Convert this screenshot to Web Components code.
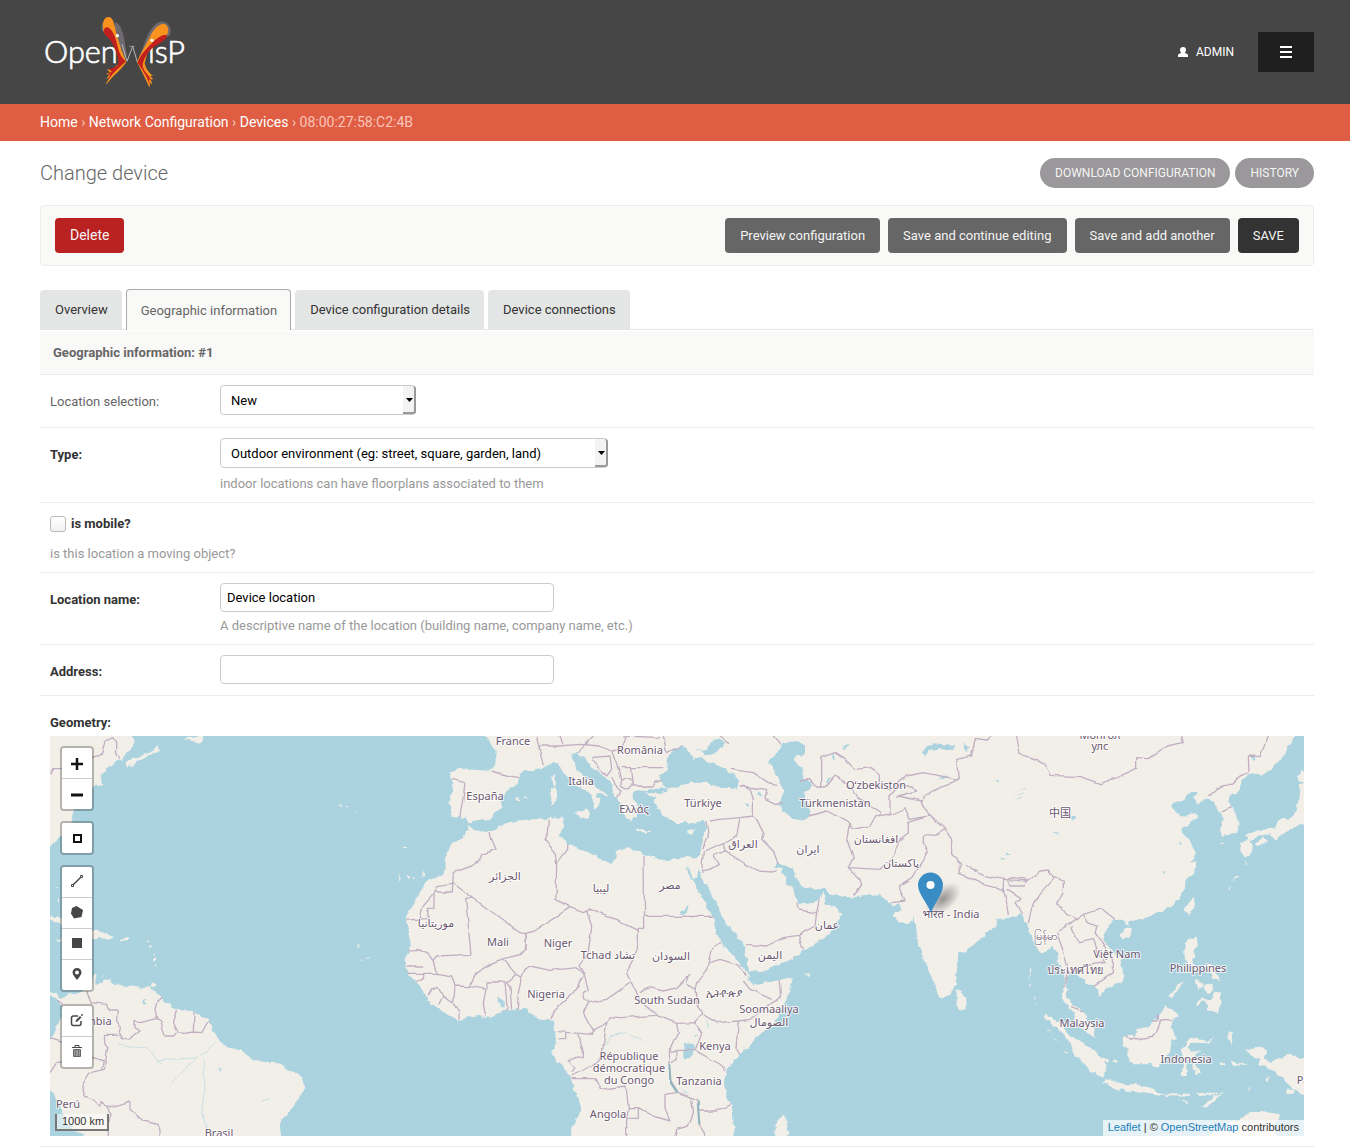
<!DOCTYPE html>
<html lang="en">
<head>
<meta charset="utf-8">
<meta name="viewport" content="width=device-width, initial-scale=1">
<title>Change device</title>
<style>
  body {
    margin: 0;
    background: white;
    color: #666;
    font: 13px/16px Roboto, sans-serif;
  }

  main {
    padding: 17px 36px 0 40px;
  }
</style>
</head>
<body>

<site-header></site-header>

<bread-crumbs current="08:00:27:58:C2:4B">
  <a href="#">Home</a>
  <a href="#">Network Configuration</a>
  <a href="#">Devices</a>
</bread-crumbs>

<main>
  <page-title>
    Change device
    <ow-button slot="tools" kind="pill">DOWNLOAD CONFIGURATION</ow-button>
    <ow-button slot="tools" kind="pill">HISTORY</ow-button>
  </page-title>

  <submit-row>
    <ow-button slot="start" kind="delete">Delete</ow-button>
    <ow-button>Preview configuration</ow-button>
    <ow-button>Save and continue editing</ow-button>
    <ow-button>Save and add another</ow-button>
    <ow-button kind="save">SAVE</ow-button>
  </submit-row>

  <tab-bar>
    <a href="#overview">Overview</a>
    <a href="#geo" class="current">Geographic information</a>
    <a href="#config">Device configuration details</a>
    <a href="#connections">Device connections</a>
  </tab-bar>

  <form-module heading="Geographic information: #1">
    <select-row label="Location selection:" value="New"></select-row>
    <select-row label="Type:" value="Outdoor environment (eg: street, square, garden, land)"
      help="indoor locations can have floorplans associated to them" required wide></select-row>
    <check-row label="is mobile?" help="is this location a moving object?" required></check-row>
    <text-row label="Location name:" value="Device location"
      help="A descriptive name of the location (building name, company name, etc.)" required></text-row>
    <text-row label="Address:" value="" required></text-row>
    <map-row label="Geometry:" required></map-row>
  </form-module>
</main>

<script>
class SiteHeader extends HTMLElement {
  constructor() {
    super();
    this.attachShadow({ mode: 'open' });
    this.shadowRoot.innerHTML = `
      <style>
        :host {
          display: flex;
          align-items: center;
          height: 104px;
          padding: 0 36px 0 40px;
          background: #464646;
        }

        #logo {
          margin-right: auto;
        }

        #logo svg {
          display: block;
        }

        #user {
          display: flex;
          align-items: center;
          gap: 7px;
          margin-right: 24px;
          color: white;
          font-size: 12px;
          text-decoration: none;
        }

        #menu {
          display: flex;
          align-items: center;
          justify-content: center;
          width: 56px;
          height: 40px;
          padding: 0;
          border: 0;
          background: #1f1f1f;
          cursor: pointer;
        }
      </style>

      <a id="logo" href="#" aria-label="OpenWISP">
        <svg width="150" height="80" viewBox="30 36 450 240">
          <g fill="#fff" stroke="#fff" stroke-width="2" font-family="Lato, sans-serif" font-weight="300" font-size="92">
            <text x="42" y="188">Open</text>
            <text x="354" y="188">isP</text>
          </g>
          <g fill="#6f6a72">
            <path d="M254 67C268 66 278 92 283 118L290 165 286 178C276 155 262 120 254 90Z"/>
            <path d="M398 64C372 66 356 96 344 128L326 176 334 168 372 112 412 74Z"/>
            <path d="M404 66C420 72 426 92 419 106L410 112Z"/>
            <path d="M219 66C213 76 214 90 220 96L226 80Z"/>
          </g>
          <g fill="none" stroke="#b9b6bb" stroke-width="3">
            <path d="M276 132L291 184 308 139 322 186"/>
            <path d="M298 139H314" stroke-width="2"/>
          </g>
          <path fill="#f7931e" d="M219 84C217 60 226 51 236 51 248 52 251 66 255 82 259 104 268 128 275 152L289 186C274 208 256 222 247 232L233 248 226 254 240 230 228 238 238 224 228 222 240 217 230 208 242 209C254 204 262 196 268 190L262 150 240 114C226 106 220 96 219 84Z"/>
          <path fill="#c1201f" d="M222 90C224 80 232 80 240 86 252 98 258 118 262 136 268 160 274 174 288 184L262 208 248 222 234 240 240 226 234 219 246 216 238 208 262 198C268 190 264 174 260 160 254 138 244 122 232 110 224 104 220 98 222 90Z"/>
          <path fill="#f7931e" d="M415 92C414 74 404 70 394 73 378 79 368 94 360 110 346 138 332 158 321 186L332 208 344 232 356 258 359 262 360 248 367 254 362 238 370 238 360 228 369 228C360 220 348 210 344 190L352 160 384 124C400 116 414 106 415 92Z"/>
          <path fill="#c1201f" d="M411 108C406 100 390 108 378 118 362 132 350 146 338 160 332 168 326 178 323 188L336 208 350 232 359 254 357 238 364 242 356 228C348 218 338 208 338 194 342 174 354 156 370 142 386 130 408 122 411 108Z"/>
          <circle cx="262" cy="107" r="5" fill="#fff"/>
          <circle cx="366" cy="121" r="5" fill="#fff"/>
        </svg>
      </a>
      <a id="user" href="#">
        <svg width="12" height="12" viewBox="0 0 12 12" fill="#fff">
          <path d="M6 1c2 0 3 1.300 3 3 0 1.200-.5 2.200-1.200 2.800L11 8.500V11H1V8.500l3.200-1.700C3.500 6.200 3 5.200 3 4c0-1.700 1-3 3-3z"/>
        </svg>
        ADMIN
      </a>
      <button id="menu" type="button" aria-label="Menu">
        <svg width="12" height="12" viewBox="0 0 12 12" stroke="#fff" stroke-width="2">
          <path d="M0 1h12M0 6h12M0 11h12"/>
        </svg>
      </button>
    `;
  }
}

customElements.define('site-header', SiteHeader);

class BreadCrumbs extends HTMLElement {
  constructor() {
    super();
    this.attachShadow({ mode: 'open' });
  }

  connectedCallback() {
    const links = [...this.querySelectorAll('a')];
    links.forEach((link, i) => { link.slot = `crumb-${i}`; });
    this.shadowRoot.innerHTML = `
      <style>
        :host {
          display: block;
          padding: 8px 40px;
          background: #df5d43;
          color: #f9c5b8;
          font-size: 14px;
          line-height: 21px;
        }

        ::slotted(a) {
          color: white;
          text-decoration: none;
        }
      </style>
      <nav>${links.map((link, i) => `<slot name="crumb-${i}"></slot> › `).join('')}${this.getAttribute('current')}</nav>
    `;
  }
}

customElements.define('bread-crumbs', BreadCrumbs);

class OwButton extends HTMLElement {
  constructor() {
    super();
    this.attachShadow({ mode: 'open' });
    this.shadowRoot.innerHTML = `
      <style>
        :host {
          display: block;
        }

        button {
          display: block;
          height: 35px;
          padding: 0 15px;
          border: 0;
          border-radius: 4px;
          background: #666;
          color: #f4f4f4;
          font: inherit;
          cursor: pointer;
        }

        :host([kind="delete"]) button {
          padding-bottom: 2px;
          background: #ba2121;
          font-size: 14px;
        }

        :host([kind="save"]) button {
          background: #333;
        }

        :host([kind="pill"]) button {
          height: 30px;
          border-radius: 15px;
          background: #9a989a;
          font-size: 12px;
        }
      </style>
      <button type="button"><slot></slot></button>
    `;
  }
}

customElements.define('ow-button', OwButton);

class PageTitle extends HTMLElement {
  constructor() {
    super();
    this.attachShadow({ mode: 'open' });
    this.shadowRoot.innerHTML = `
      <style>
        :host {
          display: flex;
          align-items: center;
          justify-content: space-between;
          margin-bottom: 17px;
        }

        h1 {
          margin: 0;
          font-size: 20px;
          font-weight: 300;
          line-height: 30px;
        }

        #tools {
          display: flex;
          gap: 5px;
        }
      </style>
      <h1><slot></slot></h1>
      <div id="tools"><slot name="tools"></slot></div>
    `;
  }
}

customElements.define('page-title', PageTitle);

class SubmitRow extends HTMLElement {
  constructor() {
    super();
    this.attachShadow({ mode: 'open' });
    this.shadowRoot.innerHTML = `
      <style>
        :host {
          display: flex;
          gap: 8px;
          margin-bottom: 23px;
          padding: 12px 14px;
          border: 1px solid #ececec;
          border-radius: 4px;
          background: #f9f9f8;
        }

        #start {
          margin-right: auto;
        }
      </style>
      <div id="start"><slot name="start"></slot></div>
      <slot></slot>
    `;
  }
}

customElements.define('submit-row', SubmitRow);

class TabBar extends HTMLElement {
  constructor() {
    super();
    this.attachShadow({ mode: 'open' });
    this.shadowRoot.innerHTML = `
      <style>
        :host {
          display: block;
        }

        nav {
          display: flex;
          align-items: flex-end;
          gap: 4px;
          border-bottom: 1px solid #e4e6e5;
        }

        ::slotted(a) {
          padding: 12px 14px 11px 15px;
          border-radius: 4px 4px 0 0;
          background: #e4e6e5;
          color: #333;
          text-decoration: none;
        }

        ::slotted(a.current) {
          margin-bottom: -1px;
          padding: 13px 13px 11px 14px;
          border: 1px solid #aaa;
          border-bottom: 0;
          background: #f9f9f8;
          color: #666;
        }
      </style>
      <nav><slot></slot></nav>
    `;
  }
}

customElements.define('tab-bar', TabBar);

class FormModule extends HTMLElement {
  constructor() {
    super();
    this.attachShadow({ mode: 'open' });
    this.shadowRoot.innerHTML = `
      <style>
        :host {
          display: block;
        }

        h2 {
          margin: 1px 0 0;
          padding: 14px 13px 13px;
          border-bottom: 1px solid #ececec;
          background: #f9f9f8;
          font-size: 13px;
          font-weight: bold;
        }
      </style>
      <h2>${this.getAttribute('heading')}</h2>
      <slot></slot>
    `;
  }
}

customElements.define('form-module', FormModule);

// Shared markup of the form rows: each subclass only draws its control
class FieldRow extends HTMLElement {
  constructor() {
    super();
    this.attachShadow({ mode: 'open' });
  }

  connectedCallback() {
    const help = this.getAttribute('help');
    this.shadowRoot.innerHTML = `
      <style>
        :host {
          display: grid;
          grid-template-columns: 170px 1fr;
          padding: 10px;
          border-bottom: 1px solid #ececec;
        }

        label {
          padding-top: 9px;
        }

        :host([required]) label {
          color: #333;
          font-weight: bold;
        }

        .help {
          padding-top: 6px;
          color: #999;
        }

        input, select {
          box-sizing: border-box;
          border: 1px solid #ccc;
          border-radius: 4px;
          background: white;
          color: black;
          font: inherit;
        }
        ${this.styles()}
      </style>
      ${this.field()}
      ${help ? `<div class="help">${help}</div>` : ''}
    `;
  }

  styles() {
    return '';
  }
}

class SelectRow extends FieldRow {
  styles() {
    return `
      :host {
        padding-bottom: 12px;
      }

      :host([help]) {
        padding-bottom: 10px;
      }

      .help {
        grid-column: 2;
        padding-top: 8px;
      }

      .select {
        position: relative;
        width: 196px;
      }

      :host([wide]) .select {
        width: 388px;
      }

      select {
        display: block;
        width: 100%;
        height: 30px;
        padding: 2px 16px 0 10px;
        appearance: none;
      }

      .arrow {
        position: absolute;
        top: 1px;
        right: 0;
        box-sizing: border-box;
        width: 13px;
        height: 28px;
        border: solid #999;
        border-width: 0 2px 2px 0;
        border-radius: 0 3px 3px 0;
        background: #f4f2f2;
        pointer-events: none;
      }

      .arrow svg {
        display: block;
        margin: 12px 0 0 3px;
      }
    `;
  }

  field() {
    return `
      <label for="control">${this.getAttribute('label')}</label>
      <div class="select">
        <select id="control"><option>${this.getAttribute('value')}</option></select>
        <span class="arrow"><svg width="7" height="4"><path d="M0 0h7L3.500 4z"/></svg></span>
      </div>
    `;
  }
}

customElements.define('select-row', SelectRow);

class TextRow extends FieldRow {
  styles() {
    return `
      .help {
        grid-column: 2;
      }

      input {
        width: 334px;
        height: 29px;
        padding: 0 6px;
      }

      :host(:not([help])) {
        padding-bottom: 11px;
      }
    `;
  }

  field() {
    return `
      <label for="control">${this.getAttribute('label')}</label>
      <input id="control" type="text" value="${this.getAttribute('value')}">
    `;
  }
}

customElements.define('text-row', TextRow);

class CheckRow extends FieldRow {
  styles() {
    return `
      :host {
        grid-template-columns: 1fr;
      }

      .check {
        display: flex;
        align-items: center;
        gap: 5px;
        padding-top: 3px;
      }

      .check label {
        padding: 0;
      }

      .help {
        padding-top: 14px;
      }

      input {
        width: 16px;
        height: 16px;
        margin: 0;
        border-color: #bbb;
        border-radius: 3px;
        background: linear-gradient(white, #f0f0f0);
        appearance: none;
      }
    `;
  }

  field() {
    return `
      <div class="check">
        <input id="control" type="checkbox">
        <label for="control">${this.getAttribute('label')}</label>
      </div>
    `;
  }
}

customElements.define('check-row', CheckRow);

class MapRow extends FieldRow {
  styles() {
    return `
      :host {
        grid-template-columns: 1fr;
      }

      .label {
        padding: 9px 0 5px;
        color: #333;
        font-weight: bold;
      }
    `;
  }

  field() {
    return `
      <div class="label">${this.getAttribute('label')}</div>
      <world-map></world-map>
    `;
  }
}

// Coastlines and borders, in thirds of a pixel from the map's top left corner
const LAND = [
  // land that runs on past the edges of the map
  'M-60 -60H245V4H-60Z M1305 -60H3735V4H1305Z M105 1196H692V1260H105Z M1565 1196H2050V1260H1565Z M-60 -60H4V330H-60Z M-60 912H4V1060H-60Z M3758 968H3822V1082H3758Z M3758 145H3822V260H3758Z M3480 1196H3685V1260H3480Z',
  // north america
  'M0 0H245L255 25 240 40 220 65 185 85 160 105 150 125 160 145 135 147 110 165 90 185 75 215 68 235 60 260 35 300 10 320 0 330Z',
  'M228 80L255 62 270 65 310 45 322 25 332 40 300 60 260 75 235 98Z M400 8L420 2 455 0 458 15 445 24 430 12Z',
  // caribbean
  'M0 535L30 545 45 560 30 565 0 547Z M118 605L126 588 140 580 165 590 188 603 170 608Z M210 607H234V613H210Z M20 607H40V612H20Z',
  'M22 487l8 4-4 8z M14 454h10v2H14z M290 612h6v4h-6z M300 628h4v6h-4z M308 652h4v6h-4z M312 668h6v8h-6z M314 686h5v5h-5z M305 740h10v12h-12z M160 718h4v6h-4z M250 342h3v3h-3z',
  // south america
  'M0 765L20 770 32 793 50 780 80 770 120 750 132 720 140 715 135 740 155 738 180 730 195 745 235 750 270 755 300 750 315 770 335 785 360 808 380 822 430 825 465 845 485 870 492 895 505 908 515 930 540 935 575 945 610 970 640 978 675 977 700 995 725 1010 750 1015 760 1035 762 1055 755 1080 735 1105 710 1140 695 1150 690 1170 692 1200H105L80 1190 45 1160 30 1110 0 1060V912L15 880 30 850 38 808 25 795 10 778 0 775Z',
  // europe and asia
  'M1305 0L1320 15 1335 40 1340 70 1330 100 1325 105 1280 102 1235 100 1220 97 1200 108 1205 130 1208 160 1197 205 1205 215V243L1250 245 1260 265 1268 258 1300 250 1322 250 1335 235 1345 218 1357 210 1350 190 1370 165 1408 142 1410 110 1425 102 1440 105 1470 97 1490 90 1510 80 1530 90 1540 110 1560 130 1585 150 1605 160 1625 178 1635 200 1630 218 1645 210 1652 192 1637 182 1640 170 1660 176 1672 182 1668 170 1640 155 1625 140 1600 120 1580 95 1565 70 1568 50 1585 48 1593 62 1600 60 1610 80 1635 100 1660 118 1680 135 1688 145 1685 170 1700 185 1710 200 1720 215 1715 232 1740 255 1750 240 1762 248 1765 222 1760 200 1745 185 1750 170 1770 165 1785 170 1800 182 1818 182 1810 200 1825 220 1830 235 1850 245 1865 260 1890 262 1910 255 1930 265 1965 250 1968 280 1960 310 1950 345 1940 365 1925 370 1908 374 1930 425 1940 430 1950 400 1953 425 1970 450 2000 500 2020 550 2050 585 2080 625 2090 665 2098 705 2130 708 2170 690 2220 672 2250 655 2260 640 2290 630 2340 590 2345 578 2377 535 2360 512 2325 505 2318 468 2308 490 2290 500 2260 505 2240 500 2235 465 2210 440 2195 400 2175 395 2180 383 2205 390 2230 400 2240 425 2265 455 2290 458 2325 455 2335 475 2405 485 2450 480 2490 478 2505 490 2525 510 2545 508 2555 520 2530 535 2550 560 2570 565 2590 555 2593 540 2598 570 2605 630 2620 665 2640 715 2655 750 2665 780 2678 788 2695 775 2715 750 2720 710 2725 655 2750 645 2770 625 2805 600 2815 585 2840 570 2840 550 2880 545 2915 530 2925 560 2940 580 2945 610 2965 635 2970 655 2990 652 3005 630 3020 645 3025 680 3042 710 3045 740 3035 770 3040 795 3055 810 3070 830 3080 860 3110 890 3135 905 3130 880 3115 850 3100 830 3085 815 3065 805 3050 780 3048 755 3050 730 3055 705 3080 712 3100 735 3120 745 3145 760 3145 780 3165 770 3180 750 3220 735 3218 700 3210 670 3185 640 3165 615 3160 595 3175 570 3195 550 3220 552 3235 572 3240 555 3270 547 3300 540 3340 525 3380 495 3400 465 3415 430 3435 395 3435 375 3420 380 3438 355 3420 315 3400 295 3390 285 3405 270 3445 243 3440 235 3410 238 3390 245 3385 232 3365 215 3370 200 3395 195 3420 165 3440 165 3432 190 3445 205 3480 185 3490 195 3500 225 3515 230 3518 260 3510 300 3530 298 3560 290 3567 270 3560 240 3545 215 3532 195 3545 180 3570 160 3575 130 3610 110 3635 120 3670 95 3700 60 3735 0Z',
  // africa
  'M1255 272L1275 283 1320 288 1350 270 1390 255 1440 250 1490 248 1515 245 1540 243 1538 255 1545 265 1535 280 1530 300 1550 320 1600 342 1625 355 1680 382 1700 370 1700 345 1730 333 1760 345 1782 358 1850 372 1910 362 1940 370 1950 380 1945 400 1935 432 1915 400 1908 390 1915 415 1935 440 1965 500 1990 545 1995 580 2015 620 2050 665 2090 705 2098 722 2090 735 2110 745 2190 732 2228 722 2225 745 2205 800 2190 830 2180 855 2130 895 2090 935 2060 965 2030 1000 2022 1040 2030 1085 2045 1105 2050 1150V1200H1560L1570 1170 1590 1130 1585 1090 1565 1040 1560 1020 1530 980 1505 960 1515 930 1520 890 1510 855 1470 850 1450 835 1430 820 1410 818 1360 825 1320 845 1280 838 1225 852 1180 828 1135 795 1130 775 1105 745 1080 720 1070 700 1062 672 1075 645 1082 610 1070 560 1068 545 1100 490 1120 450 1135 430 1170 420 1190 400V350L1205 325 1240 305Z',
  'M2175 1240L2178 1165 2200 1135 2212 1155 2218 1240Z',
  // mediterranean islands
  'M1505 125L1515 113 1518 145 1508 148Z M1500 160L1520 153 1522 195 1505 203Z M1570 228L1615 222 1613 250 1590 242Z M1755 278L1805 285 1790 291 1758 285Z M1908 288L1938 278 1925 293Z M1395 188L1408 182 1414 192 1402 196Z M1422 182h8v4h-8z',
  // atlantic islands
  'M865 208l14 2-4 5zM888 207h6v4h-6z M915 227h12v4z M1062 333h9v3h-9z M1048 412l4 22h-5z M1068 420l14 6-6 6z M1088 426h6v6h-6z M1112 422l14-16-4 14-8 6z M923 628h8v6h-8z M965 648h4v4h-4z M936 668h5v3h-5z M952 665h8v4h-8z',
  // indian ocean
  'M2720 760L2735 765 2753 805 2745 820 2728 825 2720 805Z M2264 712L2276 708 2285 714 2270 717Z M2940 692l4 4-3 24-4 14z M2936 740h3v8h-3z M2950 780h3v8h-3z M2956 802h4v6h-4z M2982 832L3000 845 3003 857 2988 846Z',
  // china sea
  'M3210 595L3225 578 3248 578 3240 600 3220 610Z M3410 510L3430 482 3437 485 3430 515 3417 540 3408 525Z M3510 322L3522 317 3518 324Z',
  // japan
  'M3590 300L3615 285 3660 278 3675 280 3685 255 3700 245 3715 252 3740 225 3745 190 3750 145 3762 140V260L3745 270 3725 282 3700 290 3685 300 3680 318 3665 295 3630 302 3595 315Z M3567 325L3595 310 3607 325 3600 360 3585 370 3575 345Z M3615 320L3640 305 3655 312 3625 331Z M3743 120L3755 105 3762 108V138L3748 132Z M3584 380h6v4h-6z M3556 420l12-2-18 16z M3536 460l8-6-6 10z',
  // philippines
  'M3410 625L3418 605 3440 605 3443 625 3430 655 3425 680 3450 700 3440 704 3405 670 3402 645Z M3440 800L3460 790 3480 790 3495 770 3510 765 3515 800 3500 830 3475 820 3465 795 3440 808Z M3465 685L3490 690 3512 735 3490 728Z M3438 728L3462 745 3445 762Z M3460 752L3485 740 3492 765 3470 772Z M3355 780L3395 738 3400 744 3360 788Z',
  // indonesia
  'M3218 900L3235 895 3255 905 3260 880 3300 870 3330 835 3350 810 3390 835 3370 850 3365 880 3382 908 3365 915 3360 950 3340 965 3320 995 3295 985 3255 985 3235 975V945L3220 930Z',
  'M2980 832L3025 855 3060 895 3100 920 3130 945 3160 970 3165 1005 3160 1025 3120 1005 3080 960 3050 905 3015 870 2985 845Z M3160 1040L3170 1030 3215 1045 3260 1045 3310 1058 3340 1080 3270 1070 3200 1060Z',
  'M3405 925L3420 905 3475 915 3492 900 3480 920 3425 920 3410 935 3420 950 3455 938 3430 960 3455 1015 3440 1020 3425 975 3410 980V1020L3395 1020 3400 970 3395 945Z M3150 960l22 10 4 8-20-6z M3190 972h12v9h-12z',
  'M3345 1070L3420 1074 3418 1080 3350 1077Z M3430 1074L3460 1070 3520 1070 3500 1077 3440 1080Z M3455 1112L3490 1085 3525 1072 3490 1098 3465 1115Z M3385 1090L3418 1100 3410 1104Z M3535 890L3550 885 3542 930 3535 915Z M3510 982h14v8h-14z M3545 978L3590 985 3588 990 3548 986Z M3645 1030L3656 1018 3652 1042Z M3592 1055l10-6-6 14z',
  'M3012 905L3024 915 3018 914Z M3040 942L3052 952 3048 956Z M2994 880h6v4h-6z M3102 1016l6 5-4 1z',
  // new guinea and australia
  'M3590 945L3615 932 3648 940 3645 965 3660 980 3710 955 3762 968V1082L3730 1060 3705 1030 3660 1000 3625 990 3635 965 3605 960Z M3710 1060L3735 1062 3732 1070 3708 1072Z M3570 1150L3590 1130 3630 1125 3690 1135 3670 1170 3685 1200H3480L3530 1165Z'
];

const WATER = [
  // black sea, azov, caspian
  'M1835 150L1830 125 1850 100 1850 70 1865 45 1895 28 1912 38 1920 55 1930 68 1955 62 1970 78 2010 90 2050 115 2068 135 2060 157 2010 155 1970 140 1910 140 1870 155Z',
  'M1935 45L1970 38 1985 18 2010 10 2025 20 2005 45 1970 62 1955 45Z',
  'M2155 75L2185 50 2198 20 2240 15 2265 25V45L2240 60 2235 80 2255 95 2265 125 2285 155 2262 170 2275 215 2278 245 2250 255 2220 242 2195 225 2190 200 2200 165 2180 120Z',
  'M1790 170L1800 160 1860 155 1850 168 1820 172Z',
  // lakes
  'M1900 925L1935 920 1932 950 1920 965 1900 970Z M2615 55L2630 28 2655 22 2715 30 2710 42 2660 38 2635 42 2622 62Z M2658 127L2690 120 2685 130Z M2330 130l12-6-4 22z M2350 50l5 2-2 24-4-6z M2375 30l26-4-20 14z M2740 22l16 12-4 12z M1970 855l5 25-6-12z M1930 895h14l-12 8z M1894 1055l26 20-20-12z M2080 205l24 2-10 8z M2120 165l18 14-14 2z',
  'M3058 245l15-8 8 14-14 4z M3012 288l16 2-14 2z M3385 320h8v6h-8z M3336 402l12 2-4 10z M2884 186l28-2v3z M2895 174l26-2v3z M2905 162l20-2v3z M2835 133h12v5h-12z M2867 350l12 6-10 2z M2855 368l16 3-14 3z M3602 62l10-6 4 14-8 4z M280 795l8-4-4 16-6 2z M505 990l8 8-4 10z M1342 780l18 14 4 24-8-4z M1906 515l10-8-4 20-30 16 20-20z'
];

const BORDERS = [
  // americas
  'M125 65L155 55 165 15 185 5 200 20V50L210 68 M0 115L8 98H35',
  'M110 768L125 800 170 805 177 822H205L203 850 208 875 205 890 215 908 235 912 270 885 255 875V857L275 860 320 848 315 820 322 795 335 783 M320 848L332 855 345 900H370L385 890 400 892 430 888 455 890 475 855 M380 825L368 855 385 890 M432 828L430 888',
  'M205 898H163L165 925 173 935 163 1000 120 1010 95 1050 105 1080 130 1090 150 1110 153 1093 170 1115 210 1105 240 1095V1120L280 1155 325 1165 328 1200 M170 1115L183 1135 175 1160V1200 M0 1010L20 980 60 975 130 965 160 975 155 1000 M0 905L35 915 M22 792L38 805',
  // iberia and balkans
  'M1325 105L1380 120 1408 125 M1205 130L1245 140 1240 180 1230 240',
  'M1460 0L1470 50 1480 88 M1465 30L1530 30 1590 25 1650 30 1680 45 M1625 65L1680 60 1685 100 1670 120 1625 70 M1730 0L1715 40 1685 45 1705 100 1712 132 M1712 95L1745 95 1825 95 1840 95 M1745 95L1750 150 1805 150 1815 135H1835 M1685 125L1710 165 1700 185 M1710 140a20 16 0 1 0 40 5a20 16 0 1 0 -40 -5 M1840 0L1850 50 1895 30 M1530 0L1540 28 M1590 50L1600 30 1630 0 M1720 0L1830 5 M2010 0L2040 20 M2170 0L2190 25',
  // north and west africa
  'M1320 288L1325 310 1338 340 1295 355 1290 372 1265 390 1210 410 1207 468H1152V517H1135L1133 548 1068 552 M1207 440L1410 590 1425 593 1450 585 1560 515 1600 530 1625 517 1762 583V577H1784L1782 358 M1784 541H1987',
  'M1270 487H1247L1263 655 1160 660 1150 672 M1207 445L1160 452 1150 475 1120 510 1110 550 M1075 643L1105 640 1135 655 1150 675 1160 715 M1072 712H1160L1205 720 1215 750 1260 752 1265 740 1280 710 1320 685 1360 668 1415 655 1428 630V593 M1070 693H1120 M1122 712L1120 725 1098 738 M1135 775L1145 758 1165 755 1178 780 1205 800 1213 780 1215 750 M1165 808L1178 782 M1210 800L1227 825V850 M1260 752L1308 760 1300 800 1307 840 M1308 760V738H1365L1372 825 M1385 820L1380 755 1370 740 1398 715 1360 670 M1402 820L1405 770 1415 725 1398 715 M1415 725L1425 700 1440 690 1500 703 1580 695 1595 705 1600 720 1570 770 1515 820 1502 850',
  'M1410 655L1428 640V595 M1498 250L1495 290 1485 310 1515 350 1520 380 1550 340V325 M1520 380L1518 490 1560 515 M1610 525L1625 570 1615 650 1590 690 1600 705 1615 760 1600 770 1605 790 1617 800 1600 830 1630 885 1628 895 1522 887 M1617 800L1670 790 1745 738 1732 705 1762 650V583 M1745 738L1760 770 1770 795 1820 838 1710 845 1680 842 1670 860 1630 885',
  // east and south africa
  'M1670 860L1655 960 1625 990 1565 1020 M1820 838L1880 862 1935 860 1958 835 1940 800 1935 760 1910 740 1920 715 1905 730 1880 755 1840 765 1800 755 1770 770 M1935 760L1940 740 1970 700 1985 635 2010 620 M1978 680L2010 670 2060 685 2090 715 M1958 835L2000 860 2065 855 2100 850 2195 780 2190 732 M2080 735L2100 760 2165 790 M2065 855L2058 940 2065 955 M1880 862L1885 890 1870 915 1855 950 1860 1030 1885 1070 1940 1090 1950 1170 1965 1200 M1935 860L1955 890 1935 943H1880 M1935 943L2020 990 2027 1005 M1945 1125L2000 1125 2045 1105',
  'M1880 1070L1845 1075V1120L1860 1155 1810 1140 1765 1115H1735L1728 1050 1650 1060 1635 1028H1565 M1735 1115L1730 1150V1200 M1765 1115V1150H1730 M1550 890V908H1522 M1580 893L1600 945V965L1555 970 1575 995 1565 1010 M1925 1090L1930 1130 1915 1170 1880 1180 1875 1200 M1855 950l25-5 2 25-20 10',
  // middle east
  'M1980 255L2010 250 2070 245 2110 240 2120 250 2140 290 2135 310 2170 345 2185 385 M2070 245L2060 300 2020 320 1965 345 M2020 320L2025 345 2120 405 2170 408 2180 400 M1960 345L1955 405 1980 400 2005 385 1990 360 2025 345 M2110 240V190L2100 160 2070 150 M2042 100L2110 110 2155 140 2185 145 M2070 150L2150 160 2145 190 2175 205 2200 200 M2090 625L2150 630 2200 605 2245 598 2260 638 M2245 598L2295 570 2300 530 2245 522 2240 500 M2300 530L2308 490 M1968 255L1975 300 1958 340',
  // central asia and india
  'M2312 150V65L2355 50 2385 70 2415 100 2465 95 2485 115V150L2520 165 2570 120 2620 110 2725 130 2720 70 2765 60 2775 10 2810 15 2820 0 M2250 135L2280 130 2300 150H2330L2355 120 2390 140 2430 190 2490 225V235 M2280 240L2330 225 2400 260 2405 280 2460 270 2480 235 2520 240 2555 225 2565 215 2580 250 2640 240 2615 200 2620 180 2725 130 M2520 240V180L2545 150H2590L2600 165 2540 180 2615 195',
  'M2400 260L2390 310 2410 365 2395 395 2430 430 2435 450 2410 480 M2395 395L2490 400 2530 360 2550 310 2575 290V260L2640 240 2685 280 2660 298 2620 295V320L2635 345 2585 425 2545 450 2565 495 2525 500 M2685 280L2705 310V355L2735 385 2725 410 2790 440 2860 460V430L2800 418 2745 385 M2860 430L2930 435 2970 405 2995 402 3015 425 3040 435V470L3022 500 3050 535 3080 550 3100 535 3155 518 3195 550 M2875 430L2890 425 2930 430 2925 450 2880 450Z M2860 460L2870 500 2875 540 M2870 460L2910 485 2895 500 2915 530 M3015 425L2970 475 2945 520 2935 560',
  // china, korea, indochina
  'M2900 0L2910 55 2960 70 2985 85 3000 118 3090 122 3150 143 3200 125 3260 97V65L3295 68 3350 30 3400 20 3395 0 M3655 0L3630 62 3595 60 3597 110 3570 120 3545 145H3520L3478 182 M3513 228L3545 215',
  'M3025 585L3080 550 M3100 535L3115 560 3140 570 3135 590 3170 640 3190 680V710L3135 748 M3065 570L3085 620 3130 610 3145 650 3165 680 3100 690 3095 715 M3020 590L3042 650 3055 700 3040 755 M3060 815L3095 828 M3228 900L3240 912 3315 900 3332 855 3365 853 M3310 855H3325V835'
];

const RIVERS = [
  'M205 920L240 935 290 935 320 975 370 970 440 965 470 945 500 920 M320 975L335 985 M440 965L395 1010 360 1045 M460 970L465 1060 455 1120 470 1180 M635 1095L660 1088',
  'M1665 930L1680 900 1730 890 1780 915'
];

// Name, then the middle of its text in pixels
const PLACES = [
  ['France', 463, 5], ['România', 590, 14], ['Italia', 531, 45], ['España', 435, 60],
  ['Ελλάς', 584, 73], ['Türkiye', 653, 67], ['Oʻzbekiston', 826, 49], ['Türkmenistan', 785, 67],
  ['العراق', 693, 108], ['افغانستان', 826, 103], ['ایران', 758, 113], ['پاکستان', 851, 127],
  ['الجزائر', 455, 140], ['ليبيا', 551, 152], ['مصر', 620, 149], ['موريتانيا', 386, 187],
  ['Mali', 448, 206], ['Niger', 508, 207], ['Tchad تشاد', 558, 219], ['السودان', 621, 220],
  ['اليمن', 720, 219], ['عمان', 777, 189], ['भारत - India', 901, 178], ['မြန်မာ', 995, 200],
  ['Nigeria', 496, 258], ['South Sudan', 617, 264], ['ኢትዮጵያ', 674, 257], ['Soomaaliya', 719, 273],
  ['الصومال', 719, 286], ['Kenya', 665, 310], ['République', 579, 320], ['démocratique', 579, 332],
  ['du Congo', 579, 344], ['Tanzania', 649, 345], ['Angola', 558, 378], ['Brasil', 169, 397],
  ['Perú', 18, 368], ['Colombia', 37, 285], ['Монгол', 1050, -1], ['улс', 1050, 10],
  ['中国', 1010, 77], ['Việt Nam', 1067, 218], ['ประเทศไทย', 1025, 234], ['Philippines', 1148, 232],
  ['Malaysia', 1032, 287], ['Indonesia', 1136, 323], ['Papua', 1263, 344]
];

const paths = list => list.map(d => `<path d="${d}"/>`).join('');

class WorldMap extends HTMLElement {
  constructor() {
    super();
    this.attachShadow({ mode: 'open' });
    this.shadowRoot.innerHTML = `
      <style>
        :host {
          display: block;
          position: relative;
          height: 400px;
          overflow: hidden;
          background: #aad3df;
          font: 11px/14px "Liberation Sans", sans-serif;
        }

        #tiles {
          display: block;
          width: 100%;
          height: 100%;
        }

        #tiles text {
          fill: #6c5870;
          stroke: white;
          stroke-opacity: 0.8;
          stroke-width: 2px;
          stroke-linejoin: round;
          paint-order: stroke;
          font: 11px "Noto Sans", "DejaVu Sans", "Noto Sans CJK SC", sans-serif;
          text-anchor: middle;
        }

        #controls {
          position: absolute;
          top: 10px;
          left: 10px;
          display: flex;
          flex-direction: column;
          gap: 10px;
        }

        #draw {
          display: flex;
          flex-direction: column;
          gap: 12px;
        }

        #scale {
          position: absolute;
          bottom: 5px;
          left: 5px;
          padding: 0 3px 1px 5px;
          border: 2px solid #777;
          border-top: 0;
          background: rgba(255,255,255,0.5);
          color: #333;
          white-space: nowrap;
        }

        #attribution {
          position: absolute;
          right: 0;
          bottom: 0;
          padding: 0 5px 2px;
          background: rgba(255,255,255,0.7);
          color: #333;
        }

        #attribution a {
          color: #1f7fb8;
          text-decoration: none;
        }
      </style>

      <svg id="tiles">
        <filter id="rough" filterUnits="userSpaceOnUse" x="-60" y="-60" width="3882" height="1320">
          <feTurbulence type="fractalNoise" baseFrequency="0.045" numOctaves="2" seed="4"/>
          <feDisplacementMap in="SourceGraphic" scale="18" xChannelSelector="R" yChannelSelector="G"/>
        </filter>
        <filter id="wavy" filterUnits="userSpaceOnUse" x="-60" y="-60" width="3882" height="1320">
          <feTurbulence type="fractalNoise" baseFrequency="0.03" numOctaves="1" seed="4"/>
          <feDisplacementMap in="SourceGraphic" scale="14" xChannelSelector="R" yChannelSelector="G"/>
        </filter>
        <g transform="scale(0.333333)">
          <g filter="url(#rough)">
            <g fill="#f2efe9">${paths(LAND)}</g>
            <g fill="#aad3df">${paths(WATER)}</g>
          </g>
          <g filter="url(#wavy)" fill="none" stroke-linejoin="round">
            <g stroke="#c9dfe4" stroke-width="3">${paths(RIVERS)}</g>
            <g stroke="#c2b0c2" stroke-width="4">${paths(BORDERS)}</g>
            <path d="M1858 985L1862 1040 1882 1070 M1943 1095L1948 1165" stroke="#8fb5c0" stroke-width="6"/>
          </g>
        </g>
        ${PLACES.map(([name, x, y]) => `<text x="${x}" y="${y + 4}">${name}</text>`).join('')}
        <defs>
          <radialGradient id="shade">
            <stop offset="0" stop-color="#555" stop-opacity="0.6"/>
            <stop offset="1" stop-color="#555" stop-opacity="0"/>
          </radialGradient>
        </defs>
        <ellipse cx="893" cy="163" rx="21" ry="12" fill="url(#shade)" transform="rotate(-40 893 163)"/>
        <path d="M881 177C878 168 868 158 868 149a12.500 12.500 0 0 1 25 0C893 158 884 168 881 177z" fill="#3a8dc4"/>
        <circle cx="880.500" cy="149" r="4" fill="white"/>
      </svg>

      <div id="controls">
        <map-toolbar>
          <button type="button" aria-label="Zoom in"><svg width="14" height="14"><path d="M1 8h12M7 2v12" stroke="#111" stroke-width="2.500"/></svg></button>
          <button type="button" aria-label="Zoom out"><svg width="14" height="14"><path d="M1 8h12" stroke="#111" stroke-width="3"/></svg></button>
        </map-toolbar>
        <map-toolbar>
          <button type="button" aria-label="Reset view"><svg width="10" height="10"><path d="M2 2h7v7H2z" fill="none" stroke="#111" stroke-width="2"/></svg></button>
        </map-toolbar>
        <div id="draw">
          <map-toolbar>
            <button type="button" aria-label="Draw a polyline"><svg width="14" height="14" fill="none" stroke="#464646"><path d="M3 10L11 2" stroke-width="1.500"/><path d="M1.500 9.500h2v2h-2zM10.500 .5h2v2h-2z"/></svg></button>
            <button type="button" aria-label="Draw a polygon"><svg width="14" height="14"><path d="M6.500 0L13 4l-1.500 7L4 12.500 1 7.500 2 2z" fill="#464646"/></svg></button>
            <button type="button" aria-label="Draw a rectangle"><svg width="10" height="12"><path d="M0 0h10v10H0z" fill="#464646"/></svg></button>
            <button type="button" aria-label="Draw a marker"><svg width="10" height="14"><path fill="#464646" fill-rule="evenodd" d="M5 0a4.500 4.500 0 0 1 4.500 4.500C9.500 7 7 9 5 12 3 9 .5 7 .5 4.500A4.500 4.500 0 0 1 5 0zM5 2.500a2 2 0 1 0 0 4 2 2 0 1 0 0-4z"/></svg></button>
          </map-toolbar>
          <map-toolbar>
            <button type="button" aria-label="Edit layers"><svg width="14" height="16" fill="none" stroke="#464646"><path d="M8 3H3.500Q1.500 3 1.500 5v5.500q0 2 2 2H9q2 0 2-2V8" stroke-width="1.500"/><path d="M5.500 9L6 7l4-4 1.500 1.500-4 4z" fill="#464646" stroke="none"/><path d="M11.500 1.500l1 1" stroke-width="2"/></svg></button>
            <button type="button" aria-label="Delete layers"><svg width="12" height="16" fill="none" stroke="#464646"><path d="M1 3.500h10M4 3V1.500h4V3"/><path d="M2.500 5.500h7v7h-7z" fill="#999" stroke="#666"/><path d="M4.500 5v7M7.500 5v7" stroke="#777"/></svg></button>
          </map-toolbar>
        </div>
      </div>
      <div id="scale">1000 km</div>
      <div id="attribution"><a href="#">Leaflet</a> | © <a href="#">OpenStreetMap</a> contributors</div>
    `;
  }
}

class MapToolbar extends HTMLElement {
  constructor() {
    super();
    this.attachShadow({ mode: 'open' });
    this.shadowRoot.innerHTML = `
      <style>
        :host {
          display: flex;
          flex-direction: column;
          gap: 1px;
          overflow: hidden;
          border: 2px solid rgba(0,0,0,0.25);
          border-radius: 4px;
          background: #ccc;
          background-clip: padding-box;
        }

        ::slotted(button) {
          display: flex;
          align-items: center;
          justify-content: center;
          width: 30px;
          height: 30px;
          padding: 0;
          border: 0;
          background: white;
          cursor: pointer;
        }
      </style>
      <slot></slot>
    `;
  }
}

customElements.define('map-toolbar', MapToolbar);
customElements.define('world-map', WorldMap);
customElements.define('map-row', MapRow);
</script>
</body>
</html>
